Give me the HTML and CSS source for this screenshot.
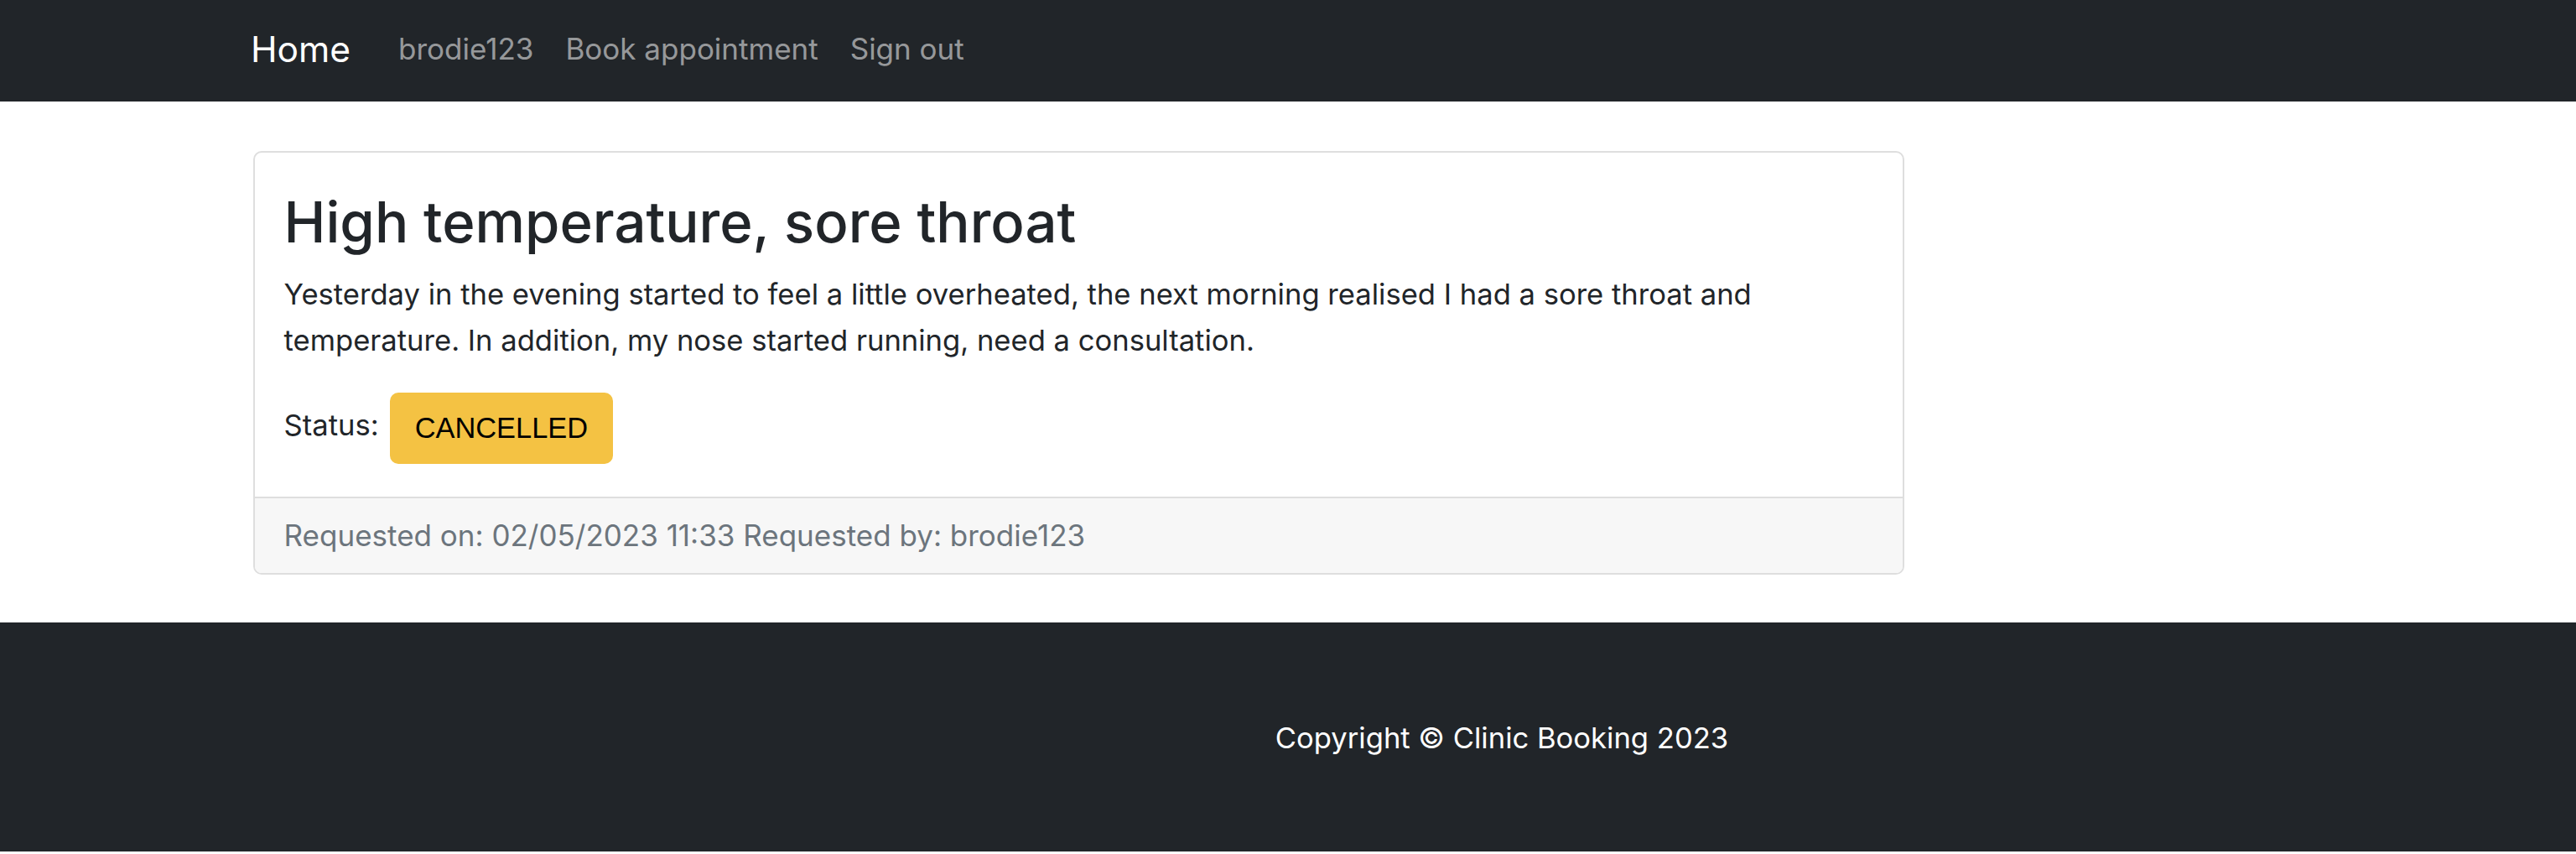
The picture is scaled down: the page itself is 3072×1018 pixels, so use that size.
FILE: index.html
```html
<!DOCTYPE html>
<html lang="en">
<head>
<meta charset="utf-8">
<title>Clinic Booking</title>
<link rel="stylesheet" href="styles.css">
</head>
<body>
<nav class="navbar">
  <a class="brand" href="#">Home</a>
  <ul class="nav-links">
    <li><a href="#">brodie123</a></li>
    <li><a href="#">Book appointment</a></li>
    <li><a href="#">Sign out</a></li>
  </ul>
</nav>

<main class="main">
  <div class="card">
    <div class="card-body">
      <h1 class="card-title">High temperature, sore throat</h1>
      <p class="card-text">Yesterday in the evening started to feel a little overheated, the next morning realised I had a sore throat and temperature. In addition, my nose started running, need a consultation.</p>
      <div class="status-row">
        <span class="status-label">Status:</span>
        <button class="status-btn" type="button">CANCELLED</button>
      </div>
    </div>
    <div class="card-footer">Requested on: 02/05/2023 11:33 Requested by: brodie123</div>
  </div>
</main>

<footer class="footer">
  <p class="copyright">Copyright © Clinic Booking 2023</p>
</footer>
</body>
</html>
```
FILE: styles.css
```css
* { box-sizing: border-box; }

body {
  margin: 0;
  background: #fff;
  color: #212529;
  font-family: "Inter", "Liberation Sans", sans-serif;
  font-size: 34.6px;
  line-height: 1.5;
}

a { text-decoration: none; }

/* Navbar */
.navbar {
  height: 121px;
  background: #212529;
  display: flex;
  align-items: center;
  padding: 0 0 4px 299px;
}

.brand {
  color: #fff;
  font-size: 42.5px;
  line-height: 1.5;
  margin-right: 57px;
}

.nav-links {
  list-style: none;
  margin: 0;
  padding: 0;
  display: flex;
  gap: 38px;
}

.nav-links a {
  color: rgba(255, 255, 255, 0.55);
  font-size: 35px;
  line-height: 1.5;
}

/* Main */
.main {
  padding: 59px 0 0 302px;
}

.card {
  width: 1969px;
  border: 2px solid #dedede;
  border-radius: 10px;
  overflow: hidden;
  background: #fff;
}

.card-body {
  padding: 42px 34.6px 39px;
}

.card-title {
  margin: 0 0 17px;
  font-size: 67px;
  font-weight: 500;
  line-height: 82px;
  color: #212529;
}

.card-text {
  margin: 0 0 36px;
  line-height: 54.6px;
}

.status-row {
  display: flex;
  align-items: center;
  gap: 13px;
  height: 85px;
}

.status-label {
  line-height: 45px;
  padding-bottom: 9px;
}

.status-btn {
  height: 85px;
  padding: 0 30px;
  border: 0;
  border-radius: 10px;
  background: #f4c243;
  color: #000;
  font-family: "Liberation Sans", Arial, sans-serif;
  font-size: 34.4px;
  line-height: 1.5;
}

.card-footer {
  padding: 19px 34.6px 18px;
  border-top: 2px solid #dedede;
  background: #f7f7f7;
  color: #6c757d;
  font-size: 35px;
  line-height: 51.9px;
}

/* Footer */
.footer {
  margin-top: 57px;
  height: 273px;
  background: #212529;
  padding: 112px 0 0 510px;
  text-align: center;
}

.copyright {
  margin: 0;
  color: #fff;
  line-height: 51.9px;
}
```
